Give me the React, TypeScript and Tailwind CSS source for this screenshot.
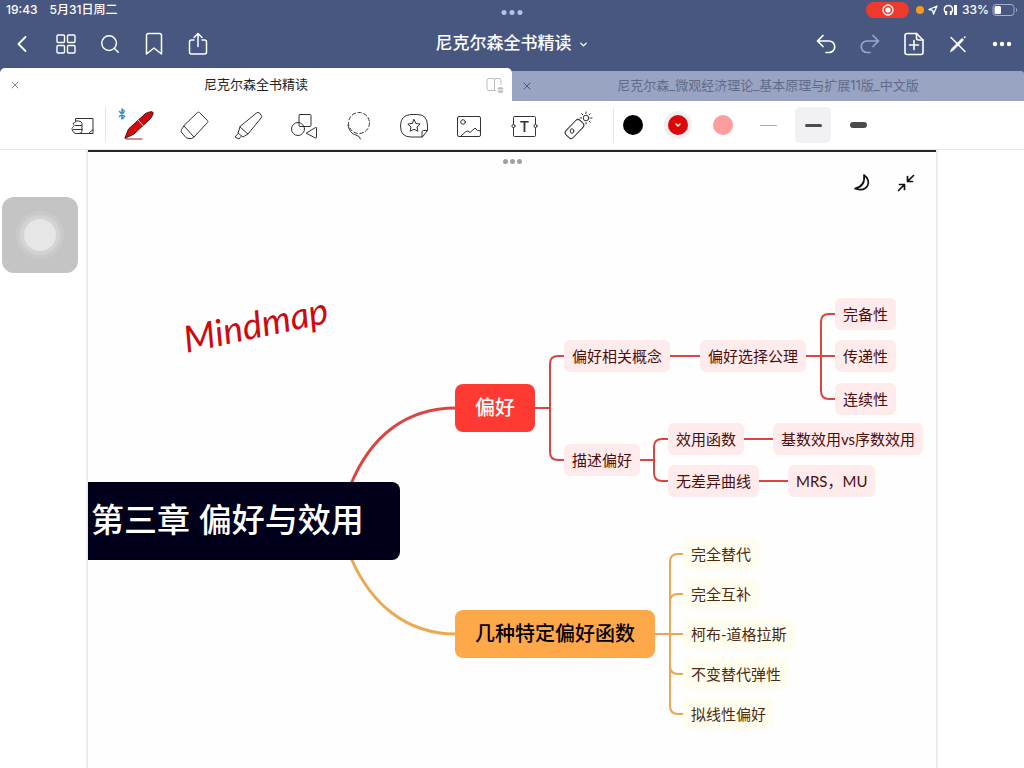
import type { ReactNode } from "react";
import clsx from "clsx";
import { ChevronDown, ChevronLeft, Search, X } from "lucide-react";

const INK = "#333333";

type IconProps = { children: ReactNode; size?: number; stroke?: string; width?: number };

const Icon = ({ children, size = 32, stroke = INK, width = 1 }: IconProps) => (
  <svg
    width={size}
    height={size}
    viewBox={`0 0 ${size} ${size}`}
    fill="none"
    stroke={stroke}
    strokeWidth={width}
    strokeLinecap="round"
    strokeLinejoin="round"
    aria-hidden="true"
  >
    {children}
  </svg>
);

const StatusBar = () => (
  <div className="relative flex h-5 items-center justify-between px-[6px] text-[12px] leading-5 font-medium">
    <div className="flex gap-3">
      <span>19:43</span>
      <span>5月31日周二</span>
    </div>
    <div className="absolute left-1/2 top-[10px] flex -translate-x-1/2 gap-[3px]">
      <i className="size-[5px] rounded-full bg-[#b3c0ee]" />
      <i className="size-[5px] rounded-full bg-[#b3c0ee]" />
      <i className="size-[5px] rounded-full bg-[#b3c0ee]" />
    </div>
    <div className="flex items-center">
      <span className="flex h-4 w-[43px] items-center justify-center rounded-full bg-[#ee3a2e]">
        <Icon size={12} stroke="#fff" width={1.3}>
          <circle cx="6" cy="6" r="5" />
          <circle cx="6" cy="6" r="2" fill="#fff" />
        </Icon>
      </span>
      <i className="ml-[7px] size-2 rounded-full bg-[#f59a1b]" />
      <span className="ml-1">
        <Icon size={10} stroke="#fff" width={1.3}>
          <path d="M9 1 1 4.500l3.700.8L5.500 9z" />
        </Icon>
      </span>
      <svg className="ml-[5px]" width="16" height="12" viewBox="0 0 16 12" fill="none" stroke="#fff" strokeWidth="1.4" aria-hidden="true">
        <path d="M3 9.500C-.5 5 2 1.500 5.500 1.500S11 5 8 9.500" />
        <path d="M3.200 7v4M7.800 7v4" strokeWidth="2" />
        <path d="M12.500 1v10" strokeWidth="3" />
      </svg>
      <span className="ml-[3px] w-[28px]">33%</span>
      <svg className="ml-[2px]" width="26" height="12" viewBox="0 0 26 12" fill="none" aria-hidden="true">
        <rect x="1" y=".5" width="21" height="11" rx="3" stroke="#a3aed0" />
        <rect x="2.500" y="2" width="6.500" height="8" rx="1.500" fill="#fff" />
        <path d="M24 4v4c1.500-.5 1.500-3.500 0-4z" fill="#a3aed0" />
      </svg>
    </div>
  </div>
);

const NavButton = ({ label, children }: { label: string; children: ReactNode }) => (
  <button type="button" aria-label={label} className="flex h-12 w-11 items-center justify-center">
    {children}
  </button>
);

const NavBar = () => (
  <div className="flex h-12 items-center justify-between">
    <div className="flex flex-1">
      <NavButton label="返回">
        <ChevronLeft size={28} strokeWidth={1.6} />
      </NavButton>
      <NavButton label="缩略图">
        <Icon size={20} stroke="#fff" width={1.4}>
          <rect x="1" y="1" width="7.500" height="7.500" rx="1" />
          <rect x="11.500" y="1" width="7.500" height="7.500" rx="1" />
          <rect x="1" y="11.500" width="7.500" height="7.500" rx="1" />
          <rect x="11.500" y="11.500" width="7.500" height="7.500" rx="1" />
        </Icon>
      </NavButton>
      <NavButton label="搜索">
        <Search size={22} strokeWidth={1.6} />
      </NavButton>
      <NavButton label="书签">
        <Icon size={24} stroke="#fff" width={1.5}>
          <path d="M6.500 1.500h11q2 0 2 2V22L12 16l-7.500 6V3.500q0-2 2-2z" />
        </Icon>
      </NavButton>
      <NavButton label="分享">
        <Icon size={24} stroke="#fff" width={1.5}>
          <path d="M8 8H5.500Q3.500 8 3.500 10v10q0 2 2 2h13q2 0 2-2V10q0-2-2-2H16" />
          <path d="M12 14.500V1.500M8 5.500l4-4 4 4" />
        </Icon>
      </NavButton>
    </div>
    <button type="button" className="flex items-center gap-[6px] text-[17px] font-medium">
      尼克尔森全书精读
      <ChevronDown size={11} strokeWidth={3} />
    </button>
    <div className="flex flex-1 justify-end">
      <NavButton label="撤销">
        <Icon size={22} stroke="#fff" width={1.7}>
          <path d="M8 2.500 2.500 8 8 13.500M2.500 8h11.500a5.500 5.500 0 0 1 0 11.500h-3" />
        </Icon>
      </NavButton>
      <NavButton label="重做">
        <Icon size={22} stroke="#98a6cf" width={1.7}>
          <path d="m14 2.500 5.500 5.500-5.500 5.500M19.500 8H8a5.500 5.500 0 0 0 0 11.500h3" />
        </Icon>
      </NavButton>
      <NavButton label="添加页面">
        <Icon size={24} stroke="#fff" width={1.6}>
          <path d="M14.500 1.500H5q-2 0-2 2v17q0 2 2 2h14q2 0 2-2V8z" />
          <path d="M14.500 1.500V6q0 2 2 2H21M12 8.500v9M7.500 13h9" />
        </Icon>
      </NavButton>
      <NavButton label="只读模式">
        <Icon size={20} stroke="#fff" width={1.5}>
          <path d="m3 3.500 14 14" />
          <path d="M2.500 17.500 4 14.500l10-10 1.500 1.500-10 10z" fill="#fff" strokeWidth="0.8" />
          <path d="m16.500 3.500.5-.5" />
        </Icon>
      </NavButton>
      <NavButton label="更多">
        <svg width="20" height="6" viewBox="0 0 20 6" fill="#fff" aria-hidden="true">
          <circle cx="3" cy="3" r="2.200" />
          <circle cx="10" cy="3" r="2.200" />
          <circle cx="17" cy="3" r="2.200" />
        </svg>
      </NavButton>
    </div>
  </div>
);

const Tabs = () => (
  <div className="flex h-[33px] items-end text-[13px]">
    <div className="relative flex h-[33px] flex-1 items-center justify-center rounded-t-[5px] bg-white text-[#222]">
      <button type="button" aria-label="关闭标签页" className="absolute left-2 flex size-[14px] items-center justify-center text-[#888]">
        <X size={12} strokeWidth={2} />
      </button>
      <a href="#notes">尼克尔森全书精读</a>
      <svg className="absolute right-[7px]" width="19" height="18" viewBox="0 0 19 18" fill="none" stroke="#bdbdbd" aria-hidden="true">
        <path d="M8.500 3v11.500M10 14.500H3q-2 0-2-2v-8q0-2 2-2h4q1.500 0 1.500 1.500 0-1.500 1.500-1.500h3q2 0 2 2V9" />
        <circle cx="14.500" cy="14" r="3" fill="#bdbdbd" stroke="none" />
        <path d="M11 14h7" stroke="#fff" />
      </svg>
    </div>
    <div className="relative flex h-[30px] flex-1 items-center justify-center rounded-tr-[3px] bg-[#98a4c1] text-[#5f6b8b]">
      <button type="button" aria-label="关闭标签页" className="absolute left-2 flex size-[14px] items-center justify-center text-[#4d5877]">
        <X size={12} strokeWidth={2} />
      </button>
      <a href="#textbook">尼克尔森_微观经济理论_基本原理与扩展11版_中文版</a>
    </div>
  </div>
);

const TOOLS = [
  {
    label: "钢笔",
    icon: (
      <svg width="44" height="36" viewBox="0 0 44 36" fill="none" strokeLinecap="round" strokeLinejoin="round" aria-hidden="true">
        <path d="m2.500 4.500 5 5L5 12V2l2.500 2.500-5 5" stroke="#2f8fd0" strokeWidth="1.500" />
        <path d="M8 31 11.500 22 28 7C31 5 35.500 4 36 5.500c.3 2-1 4-3 6.500L17 27z" fill="#d4070e" stroke="#3a1414" />
        <path d="m21.500 13.500 4.500 5" stroke="#f6d0d0" />
        <path d="M9 32h16" stroke="#9a1c1c" />
      </svg>
    ),
  },
  {
    label: "橡皮擦",
    icon: (
      <Icon>
        <path d="M19.500 3.500q1-1 2 0l8 8q1 1 0 2L16 28 6 17z" />
        <path d="M6 17l-2.500 3.500q-1 2 .5 3.500l4 4.500q1.500 1 3 1h2.500l2.500-1.500" />
      </Icon>
    ),
  },
  {
    label: "荧光笔",
    icon: (
      <Icon>
        <path d="M23.500 4q1.500-1.500 3 0L28 6q1.500 1.500 0 3L15 25l-8-7z" />
        <path d="m7 18-2 6 5 4 5-3M5 24.500l-3 3.500 4 2 2-2.500" />
      </Icon>
    ),
  },
  {
    label: "形状",
    icon: (
      <Icon>
        <rect x="11" y="5.500" width="12" height="12" rx="1" />
        <circle cx="10" cy="20" r="6.500" fill="#fff" fillOpacity="0" />
        <path d="m18.500 24 9-5.500q1-.5 1 .5v9.500q0 1-1 .5z" fill="#fff" />
      </Icon>
    ),
  },
  {
    label: "套索",
    icon: (
      <Icon>
        <circle cx="16" cy="14" r="10.500" strokeDasharray="3.500 2.500" />
        <path d="M5 16c1 6 4 9 8 10q4 1 4.500 4" />
      </Icon>
    ),
  },
  {
    label: "贴纸",
    icon: (
      <Icon>
        <path d="M24 28H13Q2.500 28 2.500 17T13 5.500h6.500Q29.500 5.500 29.500 17v4z" />
        <path d="M24 28v-5q0-1.500 1.500-1.500h4" />
        <path d="m16 10.500 1.900 4 4.300.5-3.200 3 .9 4.300-3.900-2.100-3.900 2.100.9-4.300-3.200-3 4.300-.5z" />
      </Icon>
    ),
  },
  {
    label: "图片",
    icon: (
      <Icon>
        <rect x="4.500" y="7.500" width="23" height="20" rx="1.500" />
        <circle cx="10" cy="13" r="2.300" />
        <path d="m8 27 5-4.500 2-.5 2 1.500 5-4.500 2.500 2.500 3 .5" />
      </Icon>
    ),
  },
  {
    label: "文本",
    icon: (
      <Icon>
        <rect x="5.500" y="7.500" width="22" height="20" rx="1" />
        <circle cx="5.500" cy="17" r="1.600" fill="#fff" />
        <circle cx="27.500" cy="17" r="1.600" fill="#fff" />
        <text x="16.500" y="22.500" textAnchor="middle" fontSize="15" fontFamily="Inter, sans-serif" fill={INK} stroke="none" fontWeight="500">
          T
        </text>
      </Icon>
    ),
  },
  {
    label: "激光笔",
    icon: (
      <Icon>
        <rect x="1.500" y="15" width="20" height="10" rx="3" transform="rotate(-46 11.500 20)" />
        <ellipse cx="9" cy="22" rx="1.800" ry="2.300" />
        <circle cx="23" cy="9" r="2.800" />
        <path d="M23 3v1.500M23 13.500V15M17 9h1.500M27.500 9H29M18.800 4.800l1 1M26.200 12.200l1 1M27.200 4.800l-1 1" />
      </Icon>
    ),
  },
];

const COLORS = [
  { label: "黑色", fill: "bg-black" },
  { label: "红色", fill: "bg-[#dc0606]", active: true },
  { label: "粉色", fill: "bg-[#fd9d9d]" },
];

const WIDTHS = [
  { label: "细", line: "h-px bg-[#aaaaaa]" },
  { label: "中", line: "h-[3px] bg-[#4b4b4d]", active: true },
  { label: "粗", line: "h-[6px] bg-[#4b4b4d]" },
];

const Toolbar = () => (
  <div className="flex h-[49px] items-center border-b border-[#e9e9e9] bg-white pl-[61px]">
    <button type="button" aria-label="素材" className="flex w-11 justify-center">
      <Icon>
        <path d="M8.500 12V9.500H26v11l-4.500 4H12M26 20.500v4h-4.500" />
        <path d="M8.500 12h3q3 0 3.500 2.500v8q-.5 2-3 2H9q-2 0-3-2t-1-3 1.500-2 0-2 1-2 1-1.500M8.500 16.500h6M6.500 20.500H15" />
      </Icon>
    </button>
    <div className="mr-[5px] h-9 w-px bg-[#e6e6e6]" />
    {TOOLS.map((tool) => (
      <button key={tool.label} type="button" aria-label={tool.label} className="flex w-[55px] justify-center">
        {tool.icon}
      </button>
    ))}
    <div className="ml-[7px] mr-px h-9 w-px bg-[#e6e6e6]" />
    <div className="flex gap-[9px]">
      {COLORS.map((color) => (
        <button key={color.label} type="button" aria-label={color.label} className="flex size-9 items-center justify-center">
          <span className={clsx("rounded-full", color.active && "bg-[#f0f0f2] p-1")}>
            <span className={clsx("flex size-5 items-center justify-center rounded-full text-white", color.fill)}>
              {color.active && <ChevronDown size={8} strokeWidth={4} />}
            </span>
          </span>
        </button>
      ))}
      {WIDTHS.map((width) => (
        <button
          key={width.label}
          type="button"
          aria-label={width.label}
          className={clsx("flex size-9 items-center justify-center rounded-[5px]", width.active && "bg-[#f1f1f4]")}
        >
          <span className={clsx("w-[17px] rounded-full", width.line)} />
        </button>
      ))}
    </div>
  </div>
);

const RED = "bg-[#ffebeb] text-[#4a0d0d]";
const YELLOW = "bg-[#fffeee] text-[#4d2a12]";

const LEAVES = [
  { text: "偏好相关概念", className: `${RED} left-[476px] top-[190px]` },
  { text: "偏好选择公理", className: `${RED} left-[612px] top-[190px]` },
  { text: "完备性", className: `${RED} left-[747px] top-[148px]` },
  { text: "传递性", className: `${RED} left-[747px] top-[190px]` },
  { text: "连续性", className: `${RED} left-[747px] top-[233px]` },
  { text: "描述偏好", className: `${RED} left-[476px] top-[294px]` },
  { text: "效用函数", className: `${RED} left-[580px] top-[273px]` },
  { text: "基数效用vs序数效用", className: `${RED} left-[685px] top-[273px]` },
  { text: "无差异曲线", className: `${RED} left-[580px] top-[315px]` },
  { text: "MRS，MU", className: `${RED} left-[700px] top-[315px]` },
  { text: "完全替代", className: `${YELLOW} left-[595px] top-[388px]` },
  { text: "完全互补", className: `${YELLOW} left-[595px] top-[428px]` },
  { text: "柯布-道格拉斯", className: `${YELLOW} left-[595px] top-[468px]` },
  { text: "不变替代弹性", className: `${YELLOW} left-[595px] top-[508px]` },
  { text: "拟线性偏好", className: `${YELLOW} left-[595px] top-[548px]` },
];

const Branches = () => (
  <svg className="absolute left-0 top-0" width="846" height="618" viewBox="0 0 846 618" fill="none" aria-hidden="true">
    <g stroke="#db453f" strokeWidth="2">
      <path d="M263 334C283 286 318 258 368 258" strokeWidth="3" />
      <path d="M446 258h16M476 206h-6q-8 0-8 8v88q0 8 8 8h6" />
      <path d="M582 206h30M718 206h30M748 164h-7q-8 0-8 8v69q0 8 8 8h7" />
      <path d="M551 310h15M581 289h-7q-8 0-8 8v26q0 8 8 8h7" />
      <path d="M656 289h30M671 331h30" />
    </g>
    <g stroke="#eaa950" strokeWidth="2">
      <path d="M263 408C283 454 318 484 368 484" strokeWidth="3" />
      <path d="M566 484h30M596 404h-6q-8 0-8 8v144q0 8 8 8h6" />
      <path d="M596 444h-6q-8 0-8 8M596 524h-6q-8 0-8-8" />
    </g>
  </svg>
);

const MindMap = () => (
  <>
    <Branches />
    <div className="absolute left-0 top-[332px] flex h-[78px] items-center rounded-r-lg bg-[#01001a] pl-[3px] pr-9 text-[33px] font-medium whitespace-nowrap text-white">
      第三章 偏好与效用
    </div>
    <div className="absolute left-[367px] top-[234px] flex h-12 items-center rounded-lg bg-[#ff3a32] px-5 text-[20px] font-medium whitespace-nowrap text-white">
      偏好
    </div>
    <div className="absolute left-[367px] top-[460px] flex h-12 items-center rounded-lg bg-[#ffa84a] px-5 text-[20px] font-medium whitespace-nowrap text-black">
      几种特定偏好函数
    </div>
    {LEAVES.map((leaf) => (
      <div
        key={leaf.text}
        className={clsx(
          "absolute flex h-8 items-center rounded-md px-2 font-['Lato','Noto_Sans_CJK_SC',sans-serif] text-[15px] whitespace-nowrap",
          leaf.className,
        )}
      >
        {leaf.text}
      </div>
    ))}
    <span className="absolute left-[94px] top-[144px] -rotate-12 font-['Lato',sans-serif] text-[37px] leading-[60px] text-[#cc0a0f] italic">
      Mindmap
    </span>
  </>
);

const Page = () => (
  <main className="mx-[86px] flex-1 border-x-2 border-[#ebebeb]">
    <div className="relative min-h-[618px] overflow-hidden bg-[#fefefe]">
      <div className="h-[2px] bg-[#252525]" />
      <div className="flex justify-center gap-[2px] pt-[7px]">
        <i className="size-[5px] rounded-full bg-[#a0a0a0]" />
        <i className="size-[5px] rounded-full bg-[#a0a0a0]" />
        <i className="size-[5px] rounded-full bg-[#a0a0a0]" />
      </div>
      <div className="flex justify-end gap-6 pt-[9px] pr-5">
        <button type="button" aria-label="深色模式">
          <Icon size={20} stroke="#111" width={1.7}>
            <path d="M12 2C20.500 8 16 20 3 15.500 10 14 13 9 12 2z" />
          </Icon>
        </button>
        <button type="button" aria-label="退出全屏">
          <Icon size={20} stroke="#111" width={1.7}>
            <path d="m17.500 2.500-6 6M11.500 3.500v5h5M2.500 17.500l6-6M3.500 11.500h5v5" />
          </Icon>
        </button>
      </div>
      <MindMap />
    </div>
  </main>
);

const AssistiveTouch = () => (
  <button
    type="button"
    aria-label="辅助触控"
    className="absolute left-[2px] top-[197px] flex size-[76px] items-center justify-center rounded-xl bg-[#c4c4c4]"
  >
    <span className="rounded-full bg-[#cacaca] p-1">
      <span className="block rounded-full bg-[#d3d3d3] p-1">
        <span className="block size-8 rounded-full bg-[#e6e6e6]" />
      </span>
    </span>
  </button>
);

const App = () => {
  return (
    <div className="relative flex min-h-screen flex-col bg-white font-['Inter','Noto_Sans_CJK_SC',sans-serif]">
      <header className="bg-[#48577f] text-white">
        <StatusBar />
        <NavBar />
        <Tabs />
      </header>
      <Toolbar />
      <Page />
      <AssistiveTouch />
    </div>
  );
};

export default App;
